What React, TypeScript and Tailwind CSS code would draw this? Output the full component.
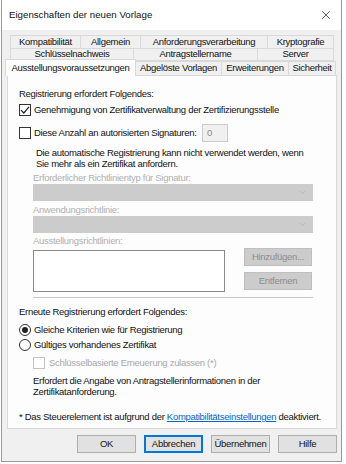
import { ChevronDown, X } from "lucide-react";

const font = "font-['Liberation_Sans',Arial,sans-serif] text-[9.5px] tracking-[-0.3px]";

const Tab = ({ label, w }: { label: string; w: string }) => (
  <div
    className={`${w} h-full flex items-center justify-center border border-[#d9d9d9] -ml-px first:ml-0 bg-[#f0f0f0] text-[#111]`}
  >
    {label}
  </div>
);

const Checkbox = ({ checked = false, disabled = false }: { checked?: boolean; disabled?: boolean }) => (
  <div
    className={`w-[12px] h-[12px] shrink-0 border flex items-center justify-center bg-white ${
      disabled ? "border-[#c4c4c4]" : "border-[#333]"
    }`}
  >
    {checked && (
      <svg width="10" height="10" viewBox="0 0 10 10">
        <path d="M1 5.2 L3.8 8 L9 1.8" fill="none" stroke="#222" strokeWidth="1.2" />
      </svg>
    )}
  </div>
);

const Radio = ({ checked = false }: { checked?: boolean }) => (
  <div className="w-[12px] h-[12px] shrink-0 rounded-full border border-[#333] bg-white flex items-center justify-center">
    {checked && <div className="w-[6px] h-[6px] rounded-full bg-[#222]" />}
  </div>
);

const Combo = () => (
  <div className="w-[280px] h-[17px] bg-[#cccccc] flex items-center justify-end pr-[6px]">
    <ChevronDown size={9} strokeWidth={1.5} className="text-[#a8a8a8]" />
  </div>
);

const Button = ({ label, primary = false }: { label: string; primary?: boolean }) => (
  <div
    className={`w-[59px] h-[18px] flex items-center justify-center bg-[#e1e1e1] text-[#111] ${
      primary ? "border-2 border-[#0078d7]" : "border border-[#adadad]"
    }`}
  >
    {label}
  </div>
);

export default function App() {
  return (
    <div className={`w-[346px] h-[464px] bg-white overflow-hidden ${font}`}>
      <div className="ml-px w-[341px] h-[462px] border border-[#9a9a9a] border-t-0 bg-[#f0f0f0] flex flex-col">
        {/* title bar */}
        <div className="h-[30px] shrink-0 bg-white flex items-center justify-between pl-[7px] pr-[8px]">
          <span className="text-[9.7px] tracking-[0px] text-[#111]">Eigenschaften der neuen Vorlage</span>
          <X size={14} strokeWidth={1.2} className="text-[#222]" />
        </div>

        {/* tabs */}
        <div className="mt-[5px] flex flex-col">
          <div className="h-[14px] flex ml-[8px]">
            <Tab label="Kompatibilität" w="w-[71px]" />
            <Tab label="Allgemein" w="w-[61px]" />
            <Tab label="Anforderungsverarbeitung" w="w-[128px]" />
            <Tab label="Kryptografie" w="w-[67px]" />
          </div>
          <div className="h-[13px] flex ml-[8px] -mt-px">
            <Tab label="Schlüsselnachweis" w="w-[124px]" />
            <Tab label="Antragstellername" w="w-[125px]" />
            <Tab label="Server" w="w-[77px]" />
          </div>
          <div className="h-[15px] flex items-end ml-[3px] relative z-10">
            <div className="w-[131px] h-[17px] flex items-center justify-center bg-[#fdfdfd] border border-[#d9d9d9] border-b-0 text-[#111]">
              Ausstellungsvoraussetzungen
            </div>
            <div className="h-[15px] flex -ml-px">
              <Tab label="Abgelöste Vorlagen" w="w-[87px]" />
              <Tab label="Erweiterungen" w="w-[68px]" />
              <Tab label="Sicherheit" w="w-[48px]" />
            </div>
          </div>
        </div>

        {/* panel */}
        <div className="ml-[5px] w-[330px] h-[354px] -mt-px bg-[#fdfdfd] border border-[#d9d9d9] pl-[11px] pt-[12px] text-[#111] flex flex-col">
          <div className="h-[12px] flex items-center">Registrierung erfordert Folgendes:</div>
          <div className="h-[14px] mt-[3px] flex items-center gap-[3px]">
            <Checkbox checked />
            <span>Genehmigung von Zertifikatverwaltung der Zertifizierungsstelle</span>
          </div>
          <div className="h-[18px] mt-[7px] flex items-center">
            <Checkbox />
            <span className="ml-[3px] w-[168px]">Diese Anzahl an autorisierten Signaturen:</span>
            <div className="w-[26px] h-[18px] border border-[#cccccc] bg-[#f0f0f0] text-[#8a8a8a] pl-[4px] flex items-center">
              0
            </div>
          </div>
          <div className="mt-[5px] ml-[17px] leading-[11px]">
            Die automatische Registrierung kann nicht verwendet werden, wenn
            <br />
            Sie mehr als ein Zertifikat anfordern.
          </div>

          <div className="ml-[14px] flex flex-col text-[#b0b0b0]">
            <div className="h-[12px] mt-[3px] flex items-center">Erforderlicher Richtlinientyp für Signatur:</div>
            <Combo />
            <div className="h-[12px] mt-[3px] flex items-center">Anwendungsrichtlinie:</div>
            <Combo />
            <div className="h-[12px] mt-[2px] flex items-center">Ausstellungsrichtlinien:</div>
            <div className="mt-[1px] flex">
              <div className="w-[192px] h-[42px] mt-[2px] bg-white border border-[#8a8a8a]" />
              <div className="ml-[19px] flex flex-col gap-[6px]">
                <div className="w-[68px] h-[18px] bg-[#cccccc] border border-[#bfbfbf] flex items-center justify-center text-[#8d8d8d]">
                  Hinzufügen...
                </div>
                <div className="w-[68px] h-[18px] bg-[#cccccc] border border-[#bfbfbf] flex items-center justify-center text-[#8d8d8d]">
                  Entfernen
                </div>
              </div>
            </div>
            <div className="w-[280px] h-px mt-[5px] bg-[#c8c8c8]" />
          </div>

          <div className="h-[12px] mt-[8px] flex items-center">Erneute Registrierung erfordert Folgendes:</div>
          <div className="h-[14px] mt-[5px] flex items-center gap-[3px]">
            <Radio checked />
            <span>Gleiche Kriterien wie für Registrierung</span>
          </div>
          <div className="h-[14px] mt-px flex items-center gap-[3px]">
            <Radio />
            <span>Gültiges vorhandenes Zertifikat</span>
          </div>
          <div className="h-[14px] mt-[4px] ml-[14px] flex items-center gap-[4px] text-[#a8a8a8]">
            <Checkbox disabled />
            <span>Schlüsselbasierte Erneuerung zulassen (*)</span>
          </div>
          <div className="mt-[5px] ml-[14px] leading-[11px]">
            Erfordert die Angabe von Antragstellerinformationen in der
            <br />
            Zertifikatanforderung.
          </div>
          <div className="h-[12px] mt-[14px] flex items-center">
            <span>
              * Das Steuerelement ist aufgrund der{" "}
              <span className="text-[#0066cc] underline">Kompatibilitätseinstellungen</span> deaktiviert.
            </span>
          </div>
        </div>

        {/* buttons */}
        <div className="mt-[6px] flex justify-end gap-[8px] pr-[4px]">
          <Button label="OK" />
          <Button label="Abbrechen" primary />
          <Button label="Übernehmen" />
          <Button label="Hilfe" />
        </div>
      </div>
    </div>
  );
}
